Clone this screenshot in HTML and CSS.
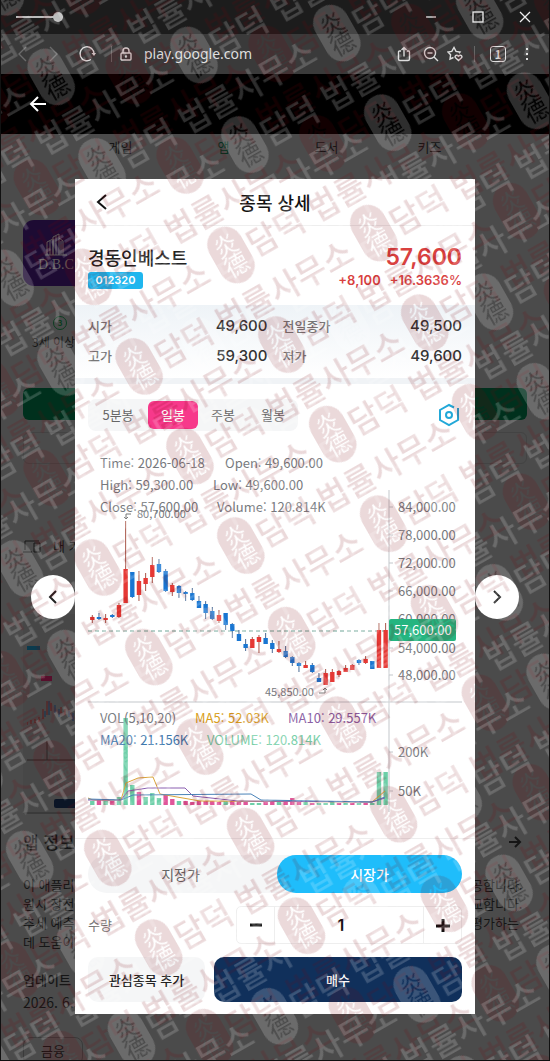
FILE: index.html
```html
<!DOCTYPE html>
<html lang="ko">
<head>
    <meta charset="UTF-8">
    <title>종목 상세</title>
    <link rel="stylesheet" href="styles.css">
</head>
<body>
    <div class="window">
        <div class="titlebar">
            <input type="range" class="opacity" min="0" max="100" value="100" aria-label="opacity">
            <div class="window-buttons">
                <button type="button" aria-label="minimize"><svg width="12" height="12" viewBox="0 0 12 12"><path d="M1 6h10"/></svg></button>
                <button type="button" aria-label="maximize"><svg width="12" height="12" viewBox="0 0 12 12"><rect x="1" y="1" width="10" height="10"/></svg></button>
                <button type="button" aria-label="close"><svg width="12" height="12" viewBox="0 0 12 12"><path d="M1 1l10 10M11 1L1 11"/></svg></button>
            </div>
        </div>

        <div class="addressbar">
            <button type="button" class="dim" aria-label="back"><svg width="18" height="18" viewBox="0 0 18 18"><path d="M12 2L5 9l7 7"/></svg></button>
            <button type="button" class="dim" aria-label="forward"><svg width="18" height="18" viewBox="0 0 18 18"><path d="M6 2l7 7-7 7"/></svg></button>
            <button type="button" class="reload" aria-label="reload"><svg width="18" height="18" viewBox="0 0 18 18"><path d="M13 14.500A7 7 0 1 1 16 9"/><path d="M13.500 8h4.500l-2 3z" fill="#ddd" stroke="none"/></svg></button>
            <span class="sep"></span>
            <svg class="lock" width="14" height="14" viewBox="0 0 14 14"><rect x="2" y="6" width="10" height="7" rx="1"/><path d="M4 6V4a3 3 0 0 1 6 0v2"/><circle cx="7" cy="9.500" r=".5"/></svg>
            <input type="text" class="url" value="play.google.com" aria-label="address">
            <button type="button" aria-label="share"><svg width="16" height="16" viewBox="0 0 16 16"><path d="M5 5H3.500a1 1 0 0 0-1 1v7a1.500 1.500 0 0 0 1.500 1.500h8a1.500 1.500 0 0 0 1.500-1.500V6a1 1 0 0 0-1-1H11M8 10.500V2M5.500 4L8 1.500 10.500 4"/></svg></button>
            <button type="button" aria-label="zoom"><svg width="16" height="16" viewBox="0 0 16 16"><circle cx="7" cy="7" r="5.500"/><path d="M11 11l4 4M4.500 7h5"/></svg></button>
            <button type="button" class="star" aria-label="favorites"><svg width="16" height="16" viewBox="0 0 16 16"><path d="M6.500 11.500L3 13l.6-4.200L1 6l3.800-.6L7 1.500l2 3.900 4 .6-1 1.200"/><path d="M11.500 14.500l-3-2.800c-1.400-1.500.8-3.600 3-1.500 2.200-2.100 4.400 0 3 1.500z"/></svg></button>
            <span class="sep last"></span>
            <button type="button" class="count">1</button>
            <button type="button" class="more" aria-label="more"><svg width="4" height="16" viewBox="0 0 4 16"><path d="M2 2v2M2 7v2M2 12v2"/></svg></button>
        </div>

        <div class="viewer-bar">
            <button type="button" aria-label="go back"><svg width="18" height="18" viewBox="0 0 18 18"><path d="M17 9H2M9 2L2 9l7 7"/></svg></button>
        </div>

        <div class="stage">
            <!-- store page behind the viewer -->
            <div class="store">
                <nav class="store-tabs">
                    <a href="#">게임</a>
                    <a href="#" class="on">앱</a>
                    <a href="#">도서</a>
                    <a href="#">키즈</a>
                </nav>
                <div class="app-icon">
                    <svg width="26" height="24" viewBox="0 0 26 24"><path d="M4 22V9l6-3v16M10 22V4l6-3v21M16 5l4 3v14M7 8v14M13 3v19M18 8v14M2 22h22"/></svg>
                    <span>D.B.C</span>
                </div>
                <div class="rating"><b>3</b><span>3세 이상</span></div>
                <div class="install"></div>
                <div class="wish"></div>
                <div class="devices">
                    <svg width="18" height="14" viewBox="0 0 18 14"><path d="M0 13h9M2 11V2h14M11 4h6v9h-6z"/></svg>
                    <span>내 기</span>
                </div>
                <div class="thumb">
                    <i class="tag"></i>
                    <i class="pill"></i>
                    <svg width="52" height="66" viewBox="0 0 52 66">
                        <path stroke="#5b1a1a" d="M0 28v-3M4 27v-4M8 26v-4M12 25v-5M16 22V12M20 18V4M24 14V6M34 16v-6M38 18v-6"/>
                        <path stroke="#14304f" d="M18 14v6M22 4v14M28 8v8M32 12v8M42 14v6M46 16v8M50 20v8"/>
                        <path stroke="#2d2323" d="M0 63h52M20 63V44"/>
                    </svg>
                    <i class="buy"></i>
                </div>
                <div class="about"><h2>앱 정보</h2><svg width="14" height="14" viewBox="0 0 14 14"><path d="M1 7h11M7 2l5 5-5 5"/></svg></div>
                <div class="desc">
                    <span>이 애플리</span><span>공합니다.</span>
                    <span>원시 장전</span><span>교합니다.</span>
                    <span>추세 예측</span><span>평가하는</span>
                    <span>데 도움이</span><span></span>
                </div>
                <div class="updated"><b>업데이트</b><span>2026. 6.</span></div>
                <a href="#" class="chip">금융</a>
            </div>

            <div class="viewer">
                <button type="button" class="nav" aria-label="previous"><svg width="16" height="16" viewBox="0 0 16 16"><path d="M11 2L5 8l6 6"/></svg></button>

                <main class="detail">
                    <header>
                        <button type="button" aria-label="back"><svg width="12" height="18" viewBox="0 0 12 18"><path d="M10 2L2 9l8 7"/></svg></button>
                        <h1>종목 상세</h1>
                    </header>

                    <section class="stock">
                        <div>
                            <h2>경동인베스트</h2>
                            <span class="code">012320</span>
                        </div>
                        <div class="price">
                            <strong>57,600</strong>
                            <p><span>+8,100</span><span>+16.3636%</span></p>
                        </div>
                    </section>

                    <dl class="summary">
                        <div><dt>시가</dt><dd>49,600</dd></div>
                        <div><dt>전일종가</dt><dd>49,500</dd></div>
                        <div><dt>고가</dt><dd>59,300</dd></div>
                        <div><dt>저가</dt><dd>49,600</dd></div>
                    </dl>

                    <div class="toolbar">
                        <div class="periods">
                            <button type="button">5분봉</button>
                            <button type="button" class="on">일봉</button>
                            <button type="button">주봉</button>
                            <button type="button">월봉</button>
                        </div>
                        <button type="button" class="settings" aria-label="settings"><svg width="22" height="24" viewBox="0 0 22 24"><path d="M16 4.500L11 2 2 7v10l9 5 9-5V5"/><circle cx="11" cy="12" r="3"/></svg></button>
                    </div>

                    <svg class="chart" viewBox="0 0 374 364">
                        <g class="line">
                            <path d="M301 40V362M0 252H374"/>
                            <path d="M301 57h4M301 85h4M301 113h4M301 141h4M301 198h4M301 225h4M301 302h4M301 341h4"/>
                        </g>
                        <path class="now" d="M0 181H301"/>
                        <g id="candles"></g>
                        <g id="volumes"></g>
                        <g class="ma">
                            <path class="ma5" d="M0 348L5 350H33L38 333 50 328 65 327 72 344 112 351 284 352 297 341"/>
                            <path class="ma10" d="M0 350H33L40 341 60 338H97L105 346 150 351 284 352 297 348"/>
                            <path class="ma20" d="M0 349L33 350 45 345 163 344 173 350 284 352 297 347"/>
                        </g>
                        <g class="label">
                            <text x="12" y="18">Time: 2026-06-18</text>
                            <text x="137" y="18">Open: 49,600.00</text>
                            <text x="12" y="40">High: 59,300.00</text>
                            <text x="125" y="40">Low: 49,600.00</text>
                            <text x="12" y="62">Close: 57,600.00</text>
                            <text x="129" y="62">Volume: 120.814K</text>
                            <text x="310" y="62">84,000.00</text>
                            <text x="310" y="90">78,000.00</text>
                            <text x="310" y="118">72,000.00</text>
                            <text x="310" y="146">66,000.00</text>
                            <text x="310" y="174">60,000.00</text>
                            <text x="310" y="203">54,000.00</text>
                            <text x="310" y="230">48,000.00</text>
                            <text x="310" y="307">200K</text>
                            <text x="310" y="346">50K</text>
                            <text x="12" y="273">VOL(5,10,20)</text>
                            <text x="107" y="273" class="t5">MA5: 52.03K</text>
                            <text x="200" y="273" class="t10">MA10: 29.557K</text>
                            <text x="12" y="295" class="t20">MA20: 21.156K</text>
                            <text x="119" y="295" class="tv">VOLUME: 120.814K</text>
                            <text x="49" y="68" class="peak">80,700.00</text>
                            <text x="177" y="246" class="peak">45,850.00</text>
                        </g>
                        <path class="tip" d="M43 64h-5v5m-2-2l2 2 2-2M231 243h6v-5m-2 2l2-2 2 2"/>
                        <rect class="badge" x="301" y="169" width="67" height="22" rx="2"/>
                        <text class="badge-text" x="306" y="185">57,600.00</text>
                    </svg>

                    <section class="order">
                        <div class="kind">
                            <button type="button">지정가</button>
                            <button type="button" class="on">시장가</button>
                        </div>
                        <div class="qty">
                            <label for="qty">수량</label>
                            <div class="stepper">
                                <button type="button" id="minus" aria-label="minus"><svg width="14" height="14" viewBox="0 0 14 14"><path d="M1 7h12"/></svg></button>
                                <input type="text" id="qty" value="1">
                                <button type="button" id="plus" aria-label="plus"><svg width="14" height="14" viewBox="0 0 14 14"><path d="M0 8h14M7 1v14"/></svg></button>
                            </div>
                        </div>
                        <div class="actions">
                            <button type="button" class="watch">관심종목 추가</button>
                            <button type="button" class="submit">매수</button>
                        </div>
                    </section>
                </main>

                <button type="button" class="nav" aria-label="next"><svg width="16" height="16" viewBox="0 0 16 16"><path d="M5 2l6 6-6 6"/></svg></button>
            </div>
        </div>

        <svg class="watermark" width="100%" height="100%" aria-hidden="true">
            <defs>
                <mask id="seal" maskUnits="userSpaceOnUse" x="-20" y="-32" width="40" height="64">
                    <rect x="-18" y="-30" width="36" height="60" rx="18" fill="#fff"/>
                    <text x="-12" y="-2" font-size="24" font-weight="400" fill="#000">炎</text>
                    <text x="-12" y="20" font-size="24" font-weight="400" fill="#000">德</text>
                </mask>
                <g id="mark">
                    <rect x="-18" y="-30" width="36" height="60" rx="18" mask="url(#seal)"/>
                    <text x="20" y="14" font-size="33">담덕 법률사무소</text>
                </g>
                <g id="tile">
                    <use href="#mark"/>
                    <use href="#mark" x="270"/>
                    <use href="#mark" y="103"/>
                    <use href="#mark" x="270" y="103"/>
                    <use href="#mark" x="135" y="51.5"/>
                    <use href="#mark" x="-135" y="51.5"/>
                </g>
                <pattern id="pale" width="270" height="103" patternUnits="userSpaceOnUse" patternTransform="translate(193 55) rotate(-29.6)">
                    <use href="#tile" fill="#fff"/>
                </pattern>
                <pattern id="red" width="270" height="103" patternUnits="userSpaceOnUse" patternTransform="translate(230 255) rotate(-29.6)">
                    <use href="#tile" fill="#780008"/>
                </pattern>
            </defs>
            <rect width="100%" height="100%" fill="url(#red)" opacity=".15"/>
            <rect width="100%" height="100%" fill="url(#pale)" opacity=".18"/>
        </svg>
    </div>

    <script>
        // [up/down, high, body top, body bottom, low]
        const candles = [
            ['u',165,167,170,173], ['d',163,167,169,170], ['u',164,168,170,173], ['d',164,165,167,168], ['u',153,155,167,168],
            ['u',71,119,153,153], ['d',122,122,147,148], ['u',121,131,145,151], ['u',123,128,134,141], ['u',107,115,127,133],
            ['d',109,114,122,123], ['d',119,121,141,142], ['u',133,135,142,146], ['d',135,136,143,148], ['d',141,142,144,151],
            ['d',138,143,150,151], ['d',146,151,158,158], ['d',151,154,163,169], ['d',157,161,169,170], ['u',160,165,171,173],
            ['d',163,163,175,180], ['d',173,174,181,188], ['d',180,184,191,191], ['d',189,194,198,201], ['u',187,189,198,198],
            ['u',185,187,192,203], ['d',183,188,194,194], ['d',190,193,199,203], ['u',191,199,202,203], ['d',196,201,207,208],
            ['d',206,207,213,216], ['d',212,213,216,222], ['u',211,215,218,218], ['d',213,215,222,223], ['d',223,228,232,232],
            ['u',219,223,235,235], ['u',219,222,232,232], ['u',220,221,225,227], ['u',215,218,222,222], ['u',214,215,220,220],
            ['d',209,210,213,215], ['u',206,209,213,214], ['d',211,211,219,219], ['u',173,180,218,218], ['u',173,180,218,218]
        ];
        const heights = [4,5,4,4,8,87,20,13,8,12,7,10,6,4,4,3,4,4,4,3,4,4,4,3,2,2,4,4,3,4,7,4,3,2,2,2,3,2,2,2,2,2,2,33,33];
        const colors = 'gpgpgggpgggppgppppppgpppggppgpppgpgggpgpgpggg';
        const step = 20 / 3;

        function draw(parent, name, attrs) {
            const el = document.createElementNS('http://www.w3.org/2000/svg', name);
            for (const key in attrs) el.setAttribute(key, attrs[key]);
            document.getElementById(parent).appendChild(el);
        }

        candles.forEach(function(c, i) {
            const x = 4.3 + i * step;
            draw('candles', 'path', { class: 'wick ' + c[0], d: 'M' + x + ' ' + c[1] + 'V' + c[4] });
            draw('candles', 'rect', { class: c[0], x: x - 2.2, y: c[2], width: 4.4, height: c[3] - c[2] });
            draw('volumes', 'rect', { class: colors[i], x: x - 2.2, y: 355 - heights[i], width: 4.4, height: heights[i] });
        });

        const qty = document.getElementById('qty');
        document.getElementById('minus').onclick = function() {
            qty.value = Math.max(1, Number(qty.value) - 1);
        };
        document.getElementById('plus').onclick = function() {
            qty.value = Number(qty.value) + 1;
        };
    </script>
</body>
</html>
```
FILE: styles.css
```css
* {
    box-sizing: border-box;
}

body {
    margin: 0;
    background: #4b4b4b;
    color: #222;
    font-family: "Noto Sans CJK KR", sans-serif;
    font-size: 13px;
    line-height: 20px;
}

h1, h2, p, dl, dd {
    margin: 0;
    font-weight: 500;
}

button, input {
    border: 0;
    padding: 0;
    background: none;
    color: inherit;
    font: inherit;
}

button {
    display: flex;
    align-items: center;
    justify-content: center;
    cursor: pointer;
}

a {
    color: inherit;
    text-decoration: none;
}

svg {
    display: block;
    flex: none;
    fill: none;
    stroke: currentColor;
}

.window {
    position: relative;
    display: flex;
    flex-direction: column;
    min-height: 100vh;
    border: 1px solid #111;
    border-top: 0;
    overflow: hidden;
}

/* browser chrome */
.titlebar {
    display: flex;
    align-items: center;
    justify-content: space-between;
    height: 34px;
    padding: 0 18px 0 15px;
    background: #1c1c1c;
    color: #eee;
    stroke-width: 1.3;
}

.opacity {
    appearance: none;
    width: 47px;
    height: 10px;
    margin: 0;
}

.opacity::-webkit-slider-runnable-track {
    height: 2px;
    background: #bbb;
}

.opacity::-webkit-slider-thumb {
    appearance: none;
    width: 10px;
    height: 10px;
    margin-top: -4px;
    border-radius: 50%;
    background: #bbb;
}

.window-buttons {
    display: flex;
    gap: 35px;
}

.addressbar {
    display: flex;
    align-items: center;
    gap: 11px;
    height: 40px;
    padding: 0 20px 0 13px;
    background: #3a3a3a;
    color: #ddd;
    stroke-width: 1.4;
}

.dim {
    margin-right: 1px;
    color: #6b6b6b;
}

.reload {
    margin-left: 4px;
}

.sep {
    width: 1px;
    height: 16px;
    margin: 0 4px;
    background: #666;
}

.sep.last {
    margin-left: 0;
}

.star {
    margin-left: -3px;
}

.lock {
    margin-left: -8px;
}

.url {
    flex: 1;
    min-width: 0;
    font-family: "Noto Sans", sans-serif;
    font-size: 14px;
}

.count {
    width: 16px;
    height: 16px;
    border: 1px solid #ddd;
    border-radius: 3px;
    font-size: 11px;
    font-weight: 700;
    line-height: 14px;
}

.more {
    margin-left: 8px;
    stroke-width: 2;
}

.viewer-bar {
    display: flex;
    align-items: center;
    height: 60px;
    padding: 0 28px;
    background: #000;
    color: #fff;
    stroke-width: 2;
}

.stage {
    position: relative;
    flex: 1;
}

/* store page, dimmed behind the viewer */
.store {
    position: absolute;
    inset: 0;
    padding: 0 22px;
    overflow: hidden;
    background: #4b4b4b;
    color: #161616;
}

.store-tabs {
    display: flex;
    justify-content: center;
    height: 26px;
    margin-bottom: 60px;
}

.store-tabs a {
    width: 103px;
    line-height: 26px;
    text-align: center;
}

.store-tabs .on {
    color: #06301f;
}

.app-icon {
    display: flex;
    flex-direction: column;
    align-items: center;
    justify-content: center;
    width: 66px;
    height: 66px;
    border-radius: 11px;
    background: #1d0b33;
    color: #5f5a5a;
    font-family: "Liberation Serif", serif;
    font-size: 14px;
    line-height: 16px;
}

.rating {
    display: flex;
    flex-direction: column;
    margin-left: 9px;
    padding-top: 30px;
    font-size: 12px;
}

.rating b {
    width: 14px;
    height: 14px;
    margin: 0 0 2px 21px;
    border: 1px solid #0c3d20;
    border-radius: 50%;
    color: #0c3d20;
    font-size: 8px;
    line-height: 12px;
    text-align: center;
}

.install {
    height: 32px;
    margin-top: 36px;
    border-radius: 6px;
    background: #00301d;
}

.wish {
    height: 32px;
    margin-top: 12px;
    border: 1px solid #434343;
    border-radius: 6px;
}

.devices {
    display: flex;
    align-items: center;
    gap: 12px;
    height: 24px;
    margin-top: 70px;
}

.thumb {
    display: flex;
    flex-direction: column;
    justify-content: flex-end;
    width: 110px;
    height: 200px;
    margin: 56px 0 16px;
    padding: 4px;
    border-bottom: 2px solid #3a3a3a;
    background: #474747;
}

.tag {
    width: 13px;
    height: 4px;
    background: #0b3b4e;
}

.pill {
    width: 11px;
    height: 5px;
    margin: 26px 14px 16px;
    background: #570f2c;
}

.buy {
    height: 9px;
    margin: 36px 0 0 27px;
    border-radius: 2px;
    background: #0b1526;
}

.about {
    display: flex;
    align-items: center;
    justify-content: space-between;
    padding-right: 5px;
    height: 24px;
    stroke-width: 2;
}

.about h2 {
    font-size: 17px;
}

.desc {
    display: grid;
    grid-template-columns: 1fr 56px;
    margin-top: 21px;
    line-height: 19px;
    white-space: nowrap;
}

.updated {
    display: flex;
    flex-direction: column;
    margin-top: 18px;
    font-size: 14px;
    line-height: 22px;
}

.updated b {
    font-size: 13px;
    font-weight: 500;
}

.chip {
    display: inline-block;
    margin-top: 24px;
    padding: 3px 17px;
    border: 1px solid #3a3a3a;
    border-radius: 8px;
}

/* viewer */
.viewer {
    position: relative;
    display: flex;
    align-items: center;
    padding: 45px 30px 46px;
}

.nav {
    flex: none;
    width: 44px;
    height: 44px;
    border-radius: 50%;
    background: #fff;
    stroke-width: 2;
}

.detail {
    flex: 1;
    min-width: 0;
    background: #fff;
}

.detail header {
    display: grid;
    grid-template-columns: 40px 1fr 40px;
    align-items: center;
    height: 47px;
    padding: 0 7px;
    border-bottom: 1px solid #eee;
    color: #111;
    stroke-width: 2;
}

.detail h1 {
    font-size: 18px;
    text-align: center;
}

.stock {
    display: flex;
    justify-content: space-between;
    height: 79px;
    padding: 20px 13px 0;
}

.stock h2 {
    margin-bottom: 4px;
    font-size: 18px;
    line-height: 22px;
}

.code {
    display: block;
    width: 55px;
    border-radius: 3px;
    background: #1fb6ee;
    color: #fff;
    font-family: Inter, sans-serif;
    font-size: 11px;
    font-weight: 600;
    line-height: 17px;
    text-align: center;
}

.price {
    color: #d9413f;
    font-family: Inter, sans-serif;
    text-align: right;
}

.price strong {
    display: block;
    margin-bottom: 4px;
    font-size: 23px;
    font-weight: 600;
    line-height: 22px;
}

.price p {
    display: flex;
    gap: 9px;
    justify-content: flex-end;
    font-weight: 600;
    line-height: 17px;
}

.summary {
    display: grid;
    grid-template-columns: 1fr 1fr;
    column-gap: 15px;
    padding: 6px 13px 7px;
    border-bottom: 6px solid #f0f3f6;
    background: linear-gradient(#eef3f7, #fff);
    line-height: 30px;
}

.summary div {
    display: flex;
    justify-content: space-between;
}

.summary dt {
    color: #777;
}

.summary dd {
    color: #333;
    font-family: Inter, sans-serif;
    font-size: 15px;
}

.toolbar {
    display: flex;
    align-items: center;
    justify-content: space-between;
    padding: 15px 13px 19px;
}

.periods {
    display: flex;
    padding: 2px 0;
    border-radius: 8px;
    background: #f5f6f7;
    color: #666;
}

.periods button {
    width: 50px;
    height: 28px;
    border-radius: 6px;
}

.periods button:first-child {
    width: 60px;
}

.periods .on {
    background: #f7398b;
    color: #fff;
    font-weight: 500;
}

.settings {
    margin-right: 2px;
    color: #22a8d8;
    stroke-width: 2;
}

.chart {
    width: calc(100% - 26px);
    margin: 0 13px;
}

.line {
    stroke: #c3c7cb;
}

.now {
    stroke: #6fa597;
    stroke-dasharray: 4 3;
}

.wick {
    stroke-width: 1;
}

.u {
    fill: #e53935;
    stroke: none;
}

.d {
    fill: #1976d2;
    stroke: none;
}

.wick.u {
    stroke: #a8564a;
}

.wick.d {
    stroke: #4a6a94;
}

.g {
    fill: #6dcfa8;
    stroke: none;
}

.p {
    fill: #e0569a;
    stroke: none;
}

.ma5 {
    stroke: #dba53a;
}

.ma10 {
    stroke: #8a5fb0;
}

.ma20 {
    stroke: #4a83b8;
}

.label {
    fill: #76797d;
    stroke: none;
    font-size: 13px;
}

.peak {
    font-size: 11px;
}

.t5 {
    fill: #d99f1c;
}

.t10 {
    fill: #8b5fa5;
}

.t20 {
    fill: #3f79ad;
}

.tv {
    fill: #78cfa9;
}

.tip {
    stroke: #777;
}

.badge {
    fill: #25b580;
    stroke: none;
}

.badge-text {
    fill: #fff;
    stroke: none;
    font-size: 13px;
}

/* order form */
.order {
    display: flex;
    flex-direction: column;
    gap: 13px;
    margin-top: 24px;
    padding: 16px 13px 12px;
    border-top: 1px solid #eee;
}

.kind {
    display: flex;
    border-radius: 19px;
    background: #f5f6f7;
    color: #666;
    font-size: 14px;
}

.kind button {
    flex: 1;
    height: 38px;
    border-radius: 19px;
}

.kind .on {
    margin-left: 4px;
    background: #1fbdfb;
    color: #fff;
    font-weight: 500;
}

.qty {
    display: flex;
    align-items: center;
    justify-content: space-between;
    color: #777;
}

.stepper {
    display: flex;
    width: 226px;
    height: 38px;
    border: 1px solid #eee;
    border-radius: 5px;
    color: #111;
    stroke-width: 3;
}

.stepper button {
    width: 37px;
}

.stepper input {
    flex: 1;
    min-width: 0;
    padding-right: 16px;
    border: solid #eee;
    border-width: 0 1px;
    font-family: Inter, sans-serif;
    font-size: 16px;
    font-weight: 600;
    text-align: center;
}

.actions {
    display: flex;
    gap: 9px;
    font-weight: 500;
}

.actions button {
    height: 45px;
    border-radius: 10px;
}

.watch {
    width: 117px;
    background: #f5f6f7;
}

.submit {
    flex: 1;
    background: #10305b;
    color: #fff;
}

.watermark {
    position: absolute;
    inset: 0;
    pointer-events: none;
    stroke: none;
    font-weight: 500;
}
```
